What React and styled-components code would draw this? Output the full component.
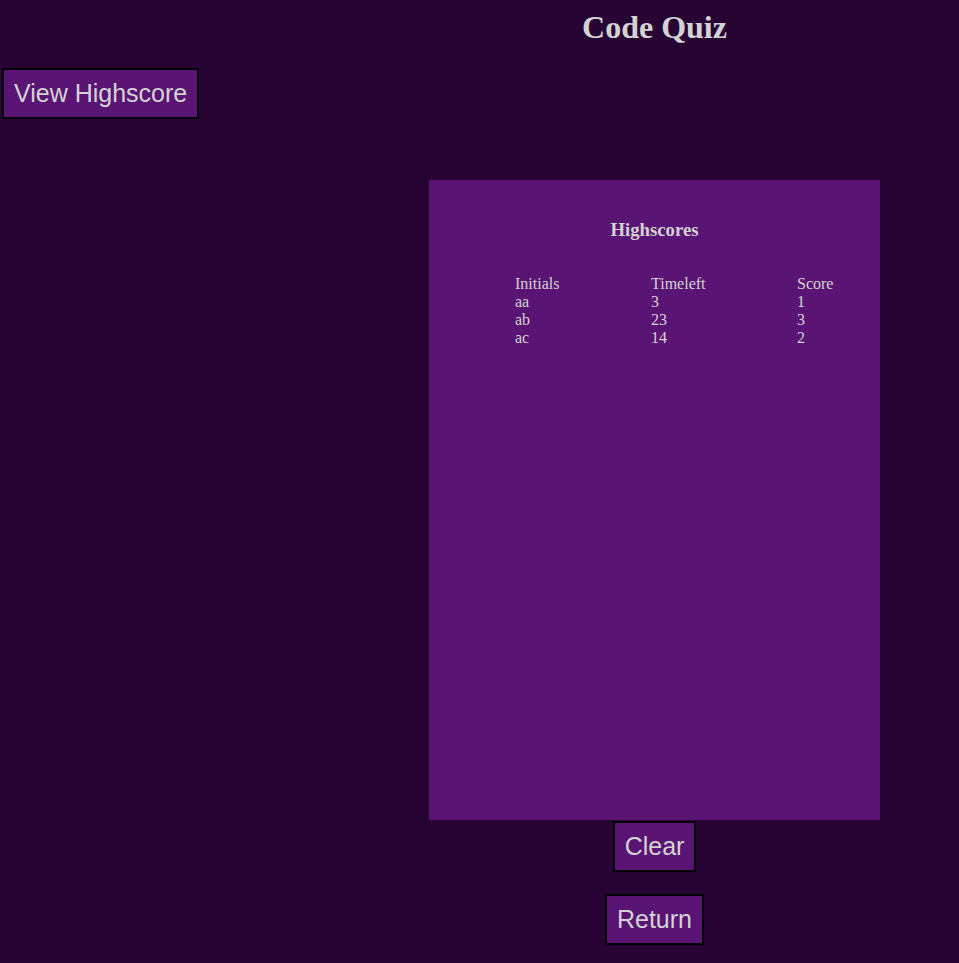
import React from 'react';
import styled, { createGlobalStyle } from 'styled-components';

const GlobalStyle = createGlobalStyle`
  html, body {
    margin: 0;
    padding: 0;
    background: #270433;
    color: #d3d3d3;
    font-family: "Liberation Serif", "Times New Roman", serif;
  }
`;

const Page = styled.div`
  display: grid;
  grid-template-columns: 350px 1fr;
  min-height: 963px;
`;

const Side = styled.aside`
  padding: 68px 0 0 2px;
`;

const Main = styled.main`
  display: flex;
  flex-direction: column;
  align-items: center;
`;

const Title = styled.h1`
  margin: 9px 0 0;
  font-size: 32px;
  font-weight: bold;
  line-height: 37px;
`;

const Button = styled.button`
  display: block;
  margin-top: ${(p) => p.$gap || 0}px;
  padding: 10px;
  background: #5a1473;
  color: #d3d3d3;
  border: 2px solid #000;
  font-family: "Liberation Sans", Arial, sans-serif;
  font-size: 25px;
  line-height: 27px;
  cursor: pointer;
`;

const Card = styled.section`
  width: 451px;
  height: 640px;
  margin-top: 134px;
  box-sizing: border-box;
  background: #5a1473;
  padding: 39px 0 0;
`;

const CardTitle = styled.h3`
  margin: 0;
  text-align: center;
  font-size: 18.72px;
  line-height: 22px;
  font-weight: bold;
`;

const Table = styled.div`
  display: grid;
  grid-template-columns: 136px 146px auto;
  margin: 34px 0 0 86px;
  font-size: 16px;
  line-height: 18px;
`;

const Cell = styled.span``;

const rows = [
  ['Initials', 'Timeleft', 'Score'],
  ['aa', '3', '1'],
  ['ab', '23', '3'],
  ['ac', '14', '2'],
];

export default function App() {
  return (
    <>
      <GlobalStyle />
      <Page>
        <Side>
          <Button>View Highscore</Button>
        </Side>
        <Main>
          <Title>Code Quiz</Title>
          <Card>
            <CardTitle>Highscores</CardTitle>
            <Table>
              {rows.map((r, i) =>
                r.map((c, j) => <Cell key={`${i}-${j}`}>{c}</Cell>)
              )}
            </Table>
          </Card>
          <Button $gap={1}>Clear</Button>
          <Button $gap={22}>Return</Button>
        </Main>
      </Page>
    </>
  );
}
